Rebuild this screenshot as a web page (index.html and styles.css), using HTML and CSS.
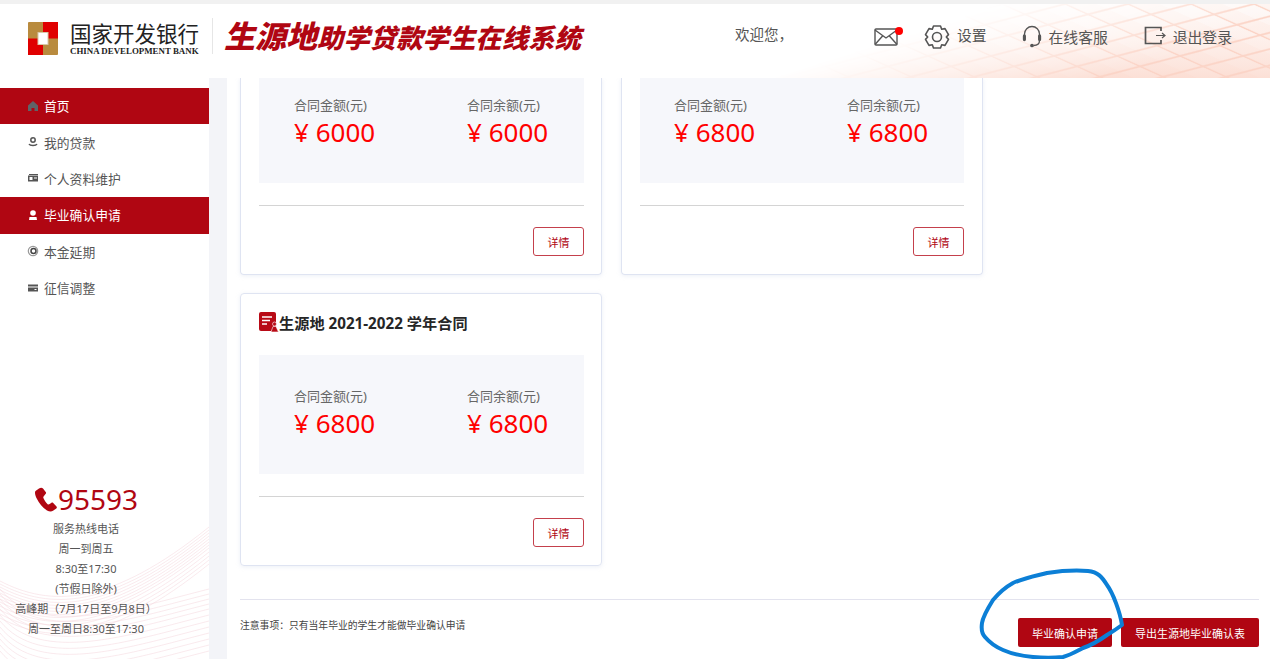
FILE: index.html

```html
<!DOCTYPE html>
<html lang="en">
<head>
    <meta charset="UTF-8">
    <meta name="viewport" content="width=device-width, initial-scale=1.0">
    <title>生源地助学贷款学生在线系统</title>
    <link rel="stylesheet" href="styles.css">
</head>
<body>
    <header class="header">
        <svg class="header-bg" width="520" height="74" viewBox="0 0 520 74">
            <defs>
                <linearGradient id="fade" gradientUnits="userSpaceOnUse" x1="20" y1="74" x2="52" y2="172">
                    <stop offset="0" stop-color="#fff" stop-opacity="0"/>
                    <stop offset="1" stop-color="#fff" stop-opacity="1"/>
                </linearGradient>
                <mask id="fadeMask"><rect width="520" height="74" fill="url(#fade)"/></mask>
                <linearGradient id="blush" x1="0" y1="0" x2="0" y2="1">
                    <stop offset="0" stop-color="#fde9e2" stop-opacity="0"/>
                    <stop offset="1" stop-color="#fbd5c8" stop-opacity=".7"/>
                </linearGradient>
                <pattern id="tiles" width="40" height="20" patternUnits="userSpaceOnUse" patternTransform="matrix(1 -.26 1.150 .52 0 0)">
                    <rect width="40" height="20" fill="#fbcfc0"/>
                    <rect x="1.200" y="1.200" width="37.600" height="17.600" fill="#fff" opacity=".75"/>
                    <rect x="20" y="1.200" width="18.800" height="17.600" fill="#fff" opacity=".45"/>
                </pattern>
            </defs>
            <g mask="url(#fadeMask)">
                <rect width="520" height="74" fill="url(#tiles)"/>
                <rect width="520" height="74" fill="url(#blush)"/>
            </g>
        </svg>
        <div class="logo">
            <svg class="logo-mark" width="30" height="33" viewBox="0 0 30 33">
                <rect width="30" height="33" rx="1" fill="#b98b3e"/>
                <rect x="15" width="15" height="16.500" fill="#e00000"/>
                <rect y="16.500" width="15" height="16.500" fill="#e00000"/>
                <rect x="10" y="10.500" width="10" height="12" fill="#fff" stroke="#d8c8a8"/>
            </svg>
            <div class="logo-text">
                <div class="logo-cn">国家开发银行</div>
                <div class="logo-en">CHINA DEVELOPMENT BANK</div>
            </div>
        </div>
        <div class="system-name"><span class="system-big">生源地</span>助学贷款学生在线系统</div>
        <div class="welcome">欢迎您，</div>
        <nav class="tools">
            <a class="tool tool-mail">
                <svg width="24" height="19" viewBox="0 0 24 19" fill="none" stroke="#555" stroke-width="1.400">
                    <rect x="1" y="2" width="22" height="16" rx="1"/>
                    <path d="M1 3l11 8 11-8M1 17.500l8-9M23 17.500l-8-9"/>
                </svg>
                <i class="dot"></i>
            </a>
            <a class="tool tool-set">
                <svg width="26" height="26" viewBox="0 0 26 26" fill="none" stroke="#555" stroke-width="1.600">
                    <path d="M9.500 2h7l1.200 3.200 3.300-.6 3.500 6-2.200 2.400 2.200 2.400-3.500 6-3.300-.6L16.500 24h-7l-1.200-3.200-3.300.6-3.500-6L3.700 13 1.500 10.600l3.500-6 3.300.6z" stroke-linejoin="round"/>
                    <circle cx="13" cy="13" r="4.500"/>
                </svg>
                <span class="tool-label">设置</span>
            </a>
            <a class="tool tool-help">
                <svg width="20" height="24" viewBox="0 0 20 24" fill="none" stroke="#555" stroke-width="1.300">
                    <path d="M2.500 11V9a7.500 7.500 0 0 1 15 0v2"/>
                    <rect x="1.500" y="10" width="1.800" height="5.500" rx=".9" fill="#555"/>
                    <rect x="16.700" y="10" width="1.800" height="5.500" rx=".9" fill="#555"/>
                    <path d="M17.500 15.500c0 3.500-3 5-6 5"/>
                    <circle cx="10" cy="20.500" r="1.200" fill="#555"/>
                </svg>
                <span class="tool-label">在线客服</span>
            </a>
            <a class="tool tool-exit">
                <svg width="22" height="19" viewBox="0 0 22 19" fill="none" stroke="#555" stroke-width="1.700">
                    <path d="M17 5V1.500H1.500v16H17V14"/>
                    <path d="M12 9.500h9M18 7l3 2.500-3 2.500" stroke-width="1.200"/>
                </svg>
                <span class="tool-label">退出登录</span>
            </a>
        </nav>
    </header>

    <div class="layout">
        <aside class="sidebar">
            <svg class="waves" width="209" height="220" viewBox="0 0 209 220" fill="none" stroke="#e59aab" stroke-width=".5" opacity=".42">
                <defs>
                    <path id="wave" d="M0 142C50 168 110 168 209 88"/>
                    <path id="waveLow" d="M0 150C40 200 130 170 209 150"/>
                </defs>
                <use href="#wave"/><use href="#wave" y="3"/><use href="#wave" y="6"/><use href="#wave" y="9"/>
                <use href="#wave" y="12"/><use href="#wave" y="15"/><use href="#wave" y="18"/><use href="#wave" y="21"/>
                <use href="#wave" y="25"/><use href="#wave" y="29"/><use href="#wave" y="33"/><use href="#wave" y="37"/>
                <use href="#waveLow"/><use href="#waveLow" y="5"/><use href="#waveLow" y="10"/><use href="#waveLow" y="15"/>
                <use href="#waveLow" y="20"/><use href="#waveLow" y="26"/><use href="#waveLow" y="32"/><use href="#waveLow" y="38"/>
                <use href="#waveLow" y="44"/><use href="#waveLow" y="50"/><use href="#waveLow" y="56"/><use href="#waveLow" y="62"/>
            </svg>
            <ul class="menu">
                <li class="menu-item active">
                    <svg class="menu-icon" width="12" height="12" viewBox="0 0 12 12"><path d="M6 1L1 5.500V11h3.500V8h3v3H11V5.500z" fill="#5f6368"/></svg>
                    首页
                </li>
                <li class="menu-item">
                    <svg class="menu-icon" width="12" height="12" viewBox="0 0 12 12" fill="none" stroke="#555" stroke-width="1.500"><circle cx="6" cy="4" r="2.200"/><path d="M2 8c1 2 7 2 8 0"/></svg>
                    我的贷款
                </li>
                <li class="menu-item">
                    <svg class="menu-icon" width="12" height="12" viewBox="0 0 12 12"><path d="M2 2h9v1H2z" fill="#555"/><path d="M1 3.500h10v6H1z" fill="#555"/><path d="M2.500 5h3v3h-3zM7 5.500h3v1H7z" fill="#fff"/></svg>
                    个人资料维护
                </li>
                <li class="menu-item active">
                    <svg class="menu-icon" width="12" height="12" viewBox="0 0 12 12" fill="#fff"><circle cx="6" cy="4" r="2.800"/><path d="M2.500 8h7l.5 3H2z"/></svg>
                    毕业确认申请
                </li>
                <li class="menu-item">
                    <svg class="menu-icon" width="12" height="12" viewBox="0 0 12 12" fill="none"><circle cx="6" cy="6" r="4.700" stroke="#999" stroke-width="1.200"/><circle cx="6.500" cy="6" r="2.500" stroke="#444" stroke-width="1.500"/></svg>
                    本金延期
                </li>
                <li class="menu-item">
                    <svg class="menu-icon" width="12" height="12" viewBox="0 0 12 12"><path d="M1 2.500h10v2H1z" fill="#555"/><path d="M1 5.500h10v4H1z" fill="#555"/><path d="M7.500 7h2v1h-2z" fill="#fff"/></svg>
                    征信调整
                </li>
            </ul>
            <div class="hotline">
                <div class="hotline-num">
                    <svg width="24" height="25" viewBox="0 0 24 25"><path d="M5 1.500L1.500 4C.5 5 1 8 3 12s6 9 10 11.500c2.500 1.300 4.500 1.300 6 .3l3.300-2.300c.7-.6.7-1.300.2-2l-3.300-3.500c-.6-.6-1.200-.6-2-.1l-2 1.400c-.6.300-1.200.2-1.800-.4-1.500-1.500-3.200-4-4-6-.3-.8-.1-1.300.4-1.700L11.500 7c.6-.5.700-1.100.4-1.800L9 1.500C8 .5 6.500.5 5 1.500z" fill="#b00612"/></svg>
                    95593
                </div>
                <p>服务热线电话</p>
                <p>周一到周五</p>
                <p>8:30至17:30</p>
                <p>(节假日除外)</p>
                <p>高峰期（7月17日至9月8日）</p>
                <p>周一至周日8:30至17:30</p>
            </div>
        </aside>

        <main class="main">
            <div class="cards-wrap">
                <div class="cards">
                    <!-- top row is scrolled under the header -->
                    <section class="card card-cut">
                        <div class="stat">
                            <div class="stat-col"><p class="stat-label">合同金额(元)</p><p class="stat-num">¥ 6000</p></div>
                            <div class="stat-col"><p class="stat-label">合同余额(元)</p><p class="stat-num">¥ 6000</p></div>
                        </div>
                        <div class="card-foot"><button class="btn-detail">详情</button></div>
                    </section>
                    <section class="card card-cut card-second">
                        <div class="stat">
                            <div class="stat-col"><p class="stat-label">合同金额(元)</p><p class="stat-num">¥ 6800</p></div>
                            <div class="stat-col"><p class="stat-label">合同余额(元)</p><p class="stat-num">¥ 6800</p></div>
                        </div>
                        <div class="card-foot"><button class="btn-detail">详情</button></div>
                    </section>
                    <section class="card">
                        <h3 class="card-title">
                            <svg width="20" height="20" viewBox="0 0 20 20"><rect width="17" height="19" rx="2" fill="#b80a16"/><path d="M3 5h10M3 8.500h8M3 12h5" stroke="#fff" stroke-width="1.500"/><circle cx="15.500" cy="12" r="2" fill="#b80a16" stroke="#fff" stroke-width=".6"/><path d="M12 20l2-5.500h3l2.500 5.500z" fill="#b80a16" stroke="#fff" stroke-width=".6"/></svg>
                            生源地 2021-2022 学年合同
                        </h3>
                        <div class="stat">
                            <div class="stat-col"><p class="stat-label">合同金额(元)</p><p class="stat-num">¥ 6800</p></div>
                            <div class="stat-col"><p class="stat-label">合同余额(元)</p><p class="stat-num">¥ 6800</p></div>
                        </div>
                        <div class="card-foot"><button class="btn-detail">详情</button></div>
                    </section>
                </div>
            </div>
            <footer class="footer">
                <p class="note">注意事项：只有当年毕业的学生才能做毕业确认申请</p>
                <div class="actions">
                    <button class="btn-red btn-apply">毕业确认申请</button>
                    <button class="btn-red btn-export">导出生源地毕业确认表</button>
                </div>
            </footer>
        </main>
    </div>

    <!-- blue marker circle drawn on the screenshot -->
    <svg class="marker" width="160" height="100" viewBox="970 562 160 100" fill="none">
        <path d="M1122 625C1120 612 1113 593 1107 585C1102 577 1098 572 1088 571C1075 570 1060 571 1047 573C1035 576 1024 578 1013 583C1004 588 998 594 993 600C988 608 983 616 982 623C981 630 982 634 985 637C990 643 996 647 1003 650C1012 654 1022 656 1033 657C1044 658 1053 658 1063 657C1071 655 1077 651 1083 648C1092 645 1100 640 1107 635C1112 632 1118 628 1122 625Z" stroke="#0c7fd6" stroke-width="4" stroke-linecap="round" stroke-linejoin="round"/>
    </svg>
</body>
</html>
```

FILE: styles.css

```css
* {
    margin: 0;
    padding: 0;
    box-sizing: border-box;
}

html, body {
    height: 100%;
}

body {
    font-family: "Noto Sans", "Noto Sans CJK SC", sans-serif;
    color: #555;
    background: #fff;
    border-top: 4px solid #f1f1f1;
    overflow: hidden;
    position: relative;
    display: flex;
    flex-direction: column;
}

/* header */
.header {
    height: 74px;
    flex-shrink: 0;
    display: flex;
    align-items: center;
    padding-bottom: 6px;
    position: relative;
    background: #fff;
    z-index: 2;
}

.header-bg {
    position: absolute;
    right: 0;
    top: 0;
}

.logo {
    display: flex;
    align-items: center;
    gap: 12px;
    margin-left: 28px;
    position: relative;
}

.logo-cn {
    font-family: "Noto Sans CJK SC", sans-serif;
    font-size: 21.500px;
    line-height: 26px;
    color: #222;
    white-space: nowrap;
}

.logo-en {
    font-family: "Liberation Serif", serif;
    font-weight: bold;
    font-size: 8.900px;
    line-height: 11px;
    color: #222;
    white-space: nowrap;
}

.system-name {
    margin-left: 13px;
    padding-left: 11px;
    font-family: "Noto Sans CJK SC", sans-serif;
    font-weight: 900;
    font-style: italic;
    font-size: 26.400px;
    line-height: 34px;
    color: #b00612;
    white-space: nowrap;
    position: relative;
    margin-bottom: 4px;
    border-left: 1px solid #e6e6e6;
}

.system-big {
    font-size: 31px;
}

.welcome {
    position: relative;
    margin-left: 154px;
    font-size: 14.500px;
    margin-top: -9px;
}

.tools {
    display: flex;
    align-items: center;
    position: relative;
    margin-left: 81px;
    font-size: 14.800px;
    margin-top: -2px;
}

.tool {
    display: flex;
    align-items: center;
    position: relative;
    white-space: nowrap;
}

.tool-label {
    margin-bottom: 2px;
}

.tool-mail { margin-right: 26px; padding-bottom: 2px; }
.tool-set { gap: 7px; margin-right: 35px; }
.tool-set .tool-label { margin-bottom: 5px; }
.tool-help { gap: 7px; margin-right: 36px; }
.tool-exit { gap: 7px; }
.tool-exit svg { margin-bottom: 3px; }

.dot {
    position: absolute;
    right: -5px;
    top: 0;
    width: 8px;
    height: 8px;
    border-radius: 50%;
    background: #f00;
}

/* page body */
.layout {
    flex: 1;
    display: flex;
    min-height: 0;
    background: #f3f4f8;
}

.sidebar {
    width: 209px;
    background: #fff;
    padding-top: 10px;
    position: relative;
    display: flex;
    flex-direction: column;
    justify-content: space-between;
    flex-shrink: 0;
}

.waves {
    position: absolute;
    left: 0;
    bottom: 0;
}

.menu {
    list-style: none;
    position: relative;
}

.menu-item {
    height: 36.400px;
    display: flex;
    align-items: center;
    gap: 5px;
    padding-left: 27px;
    padding-bottom: 1px;
    font-size: 12.800px;
}

.menu-item.active {
    background: #b00612;
    color: #fff;
}

.hotline {
    position: relative;
    width: 172px;
    padding-bottom: 20px;
    text-align: center;
    font-size: 11px;
    line-height: 20px;
    white-space: nowrap;
}

.hotline-num {
    display: flex;
    justify-content: center;
    align-items: center;
    font-size: 28px;
    line-height: 40px;
    color: #b00612;
}

.main {
    flex: 1;
    margin-left: 18px;
    background: #fff;
    display: flex;
    flex-direction: column;
    min-width: 0;
}

.cards-wrap {
    flex: 1;
    min-height: 0;
    overflow: hidden;
    padding-left: 13px;
}

.cards {
    display: flex;
    flex-wrap: wrap;
    gap: 18px 19px;
    width: 762px;
}

.card {
    width: 362px;
    height: 273px;
    border: 1px solid #dfe4f2;
    border-radius: 4px;
    padding: 0 17px 0 18px;
    box-shadow: 0 1px 4px rgba(200, 208, 230, 0.35);
}

.card-cut {
    height: 197px;
    border-top: 0;
    border-radius: 0 0 4px 4px;
}

.card-cut .stat {
    height: 105px;
    padding-top: 0;
}

.card-cut .stat-col {
    margin-top: -14px;
}

.card-second {
    padding-right: 18px;
}

.card-second .stat {
    padding-left: 34px;
}

.card-title {
    display: flex;
    align-items: center;
    height: 61px;
    padding-bottom: 6px;
    font-size: 15.200px;
    font-weight: 700;
    color: #262626;
    white-space: nowrap;
}

.stat {
    height: 119px;
    background: #f6f7fb;
    display: flex;
    align-items: center;
    padding-left: 35px;
}

.stat-col {
    width: 173px;
    flex-shrink: 0;
}

.stat-label {
    font-size: 13px;
    line-height: 18px;
    margin-top: -2px;
    color: #666;
}

.stat-num {
    font-size: 26px;
    line-height: 36px;
    color: #f00;
}

.card-foot {
    margin-top: 22px;
    padding-top: 21px;
    border-top: 1px solid #d4d4d4;
    display: flex;
    justify-content: flex-end;
}

.btn-detail {
    width: 51px;
    height: 29px;
    background: #fff;
    border: 1px solid #c4404c;
    border-radius: 3px;
    color: #b00612;
    font-family: inherit;
    font-size: 11px;
}

.footer {
    height: 60px;
    flex-shrink: 0;
    margin: 0 11px 0 13px;
    border-top: 1px solid #e3e3ee;
    display: flex;
    justify-content: space-between;
    align-items: flex-start;
}

.note {
    font-size: 9.800px;
    line-height: 14px;
    margin-top: 19px;
    color: #444;
}

.actions {
    display: flex;
    gap: 9px;
    margin-top: 18px;
}

.btn-red {
    height: 29px;
    background: #b00612;
    border: 0;
    border-radius: 2px;
    color: #fff;
    font-family: inherit;
    font-size: 11px;
}

.btn-apply { width: 94px; }
.btn-export { width: 138px; }

.marker {
    position: absolute;
    left: 970px;
    top: 558px;
    z-index: 3;
}
```
